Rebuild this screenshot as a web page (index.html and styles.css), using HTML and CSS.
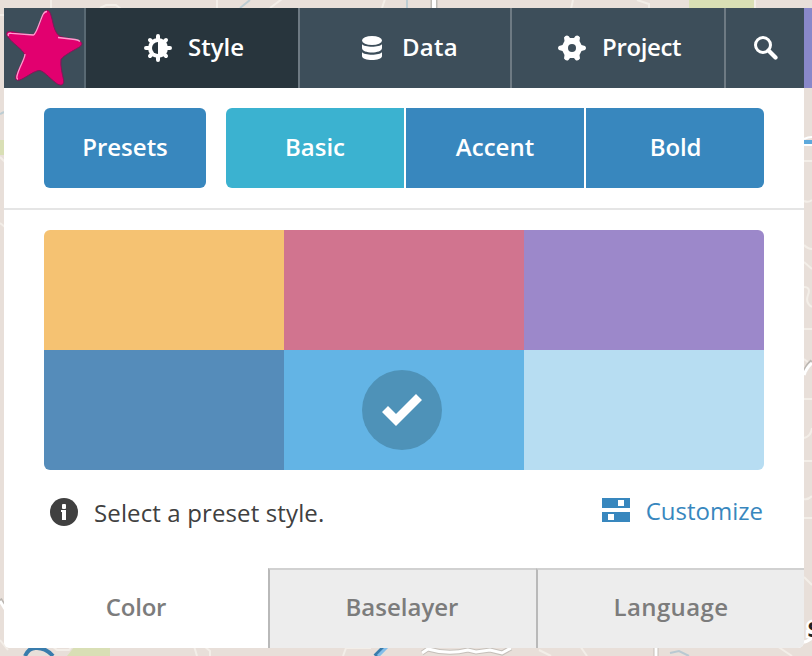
FILE: index.html
```html
<!DOCTYPE html>
<html lang="en">
<head>
<meta charset="utf-8">
<title>Map editor</title>
<link rel="stylesheet" href="styles.css">
</head>
<body>
<svg class="map" width="812" height="656" viewBox="0 0 812 656" fill="none" aria-hidden="true">
  <g fill="#d9dfb5"><path d="M689 0h65v10h-65zM0 140h6v15H0zM75 646h35v10H67z"/></g>
  <g stroke="#f3eee8" stroke-width="2">
    <path d="M0 15h5M51 0v10M100 8l6-3h10l5 4M217 0v10M270 8l12-9M382 8l3-9M573 0l-2 9M637 0l12 4v5M755 0v10"/>
    <path d="M0 157l5 5M0 223l5 4M0 640l8 10M52 646l5 4h12l3-4M194 646l3 10M204 646l6 5v5M343 656l3-8h25M539 650l12 6M580 646l7 10M777 646l15 10"/>
    <path d="M804 161h8M804 201q5 2 8-1M804 245q4 4 8 4M804 262l8 7M804 287q7 0 4 8t4 12M804 329h8M804 359l5 4M804 399h8M804 438q7-2 8-10M804 461h8M804 499q4 1 8-3M804 518h8M804 577l8 8"/>
  </g>
  <path d="M434 0v9" stroke="#bcbab5" stroke-width="7"/><path d="M434 0v9" stroke="#fff" stroke-width="4"/>
  <path d="M407 0v9M250 0l-10 8M0 114l4-2" stroke="#bdcdd3" stroke-width="2"/>
  <path d="M804 373q3-8 8-12M0 599l5 8" stroke="#bcb7b2" stroke-width="4"/>
  <path d="M804 375q3-8 8-12M0 601l5 8" stroke="#fff" stroke-width="3"/>
  <path d="M422 653l6-4q20 6 40 1l8 2 14-2 12 3 9-5M656 646v10" stroke="#c5c0ba" stroke-width="5"/>
  <path d="M422 653l6-4q20 6 40 1l8 2 14-2 12 3 9-5M656 646v10" stroke="#fff" stroke-width="3"/>
  <path d="M25 656q4-9 12-8 9 0 16 8M375 656l11-11" stroke="#397cac" stroke-width="4"/>
  <path d="M378 656l11-11" stroke="#83bee9" stroke-width="3"/>
  <path d="M804 139q4-2 8-2M804 145h8" stroke="#fff" stroke-width="2"/>
  <path d="M804 142h8" stroke="#5da9dc" stroke-width="4"/>
  <path d="M670 653l9-2 10 5" stroke="#b9c9d2" stroke-width="2"/>
  <path d="M803 642q4 0 9-4" stroke="#fff" stroke-width="3"/>
  <path d="M804 8h8v80h-8z" fill="#8988ca"/>
  <text class="map-label" x="807.500" y="637">S</text>
</svg>

<main class="panel">
  <nav class="topbar">
    <a class="logo">
      <svg width="80" height="80" viewBox="0 0 80 80" aria-hidden="true">
        <path d="M43 2.500c3-.5 4 4.500 5.500 10.500 1.500 7 3 12 7 15 6 2.500 15 2.500 20 5 4 2 2.500 4.500-1 6.500-5 3-15 8-17.500 12-.8 7 1.500 15 2.500 20 1 5-2 7-6 4.500-5-3-13-12.500-17.500-13.500-5-.5-14 7-19 9-4 2-6.500 0-5-4C14 61 21 51 20.500 46.500 19.500 42 8 35 4 29c-3-4-1-6 3-5.500 6 .5 17 4.500 23 2.500C34 22 37 12 39 7c1-3 2-4.500 4-4.500z" fill="#e2006f" stroke="#811759"/>
        <path d="M4.500 28c-1-2 0-3 3-2.700l22 1.700c3-1 6-13 9.500-20.500 1-2 2-3 4-3M54 29.500l17 2c3 .5 4 1 5 2M21 46c0 5-6 13-8 22-.4 2 0 3 1 3" fill="none" stroke="#ff9bce" stroke-width="1.300"/>
      </svg>
    </a>
    <a class="tab tab-style active">
      <svg class="icon" width="28" height="28" viewBox="0 0 28 28" aria-hidden="true">
        <g stroke="#fff" stroke-width="4" stroke-linecap="round"><path d="M14 2v24M2 14h24M6 6l16 16M6 22L22 6"/></g>
        <circle cx="14" cy="14" r="10" fill="#fff"/>
        <path d="M14 8a6 6 0 0 0 0 12z" fill="#28353d"/>
      </svg>
      <span>Style</span>
    </a>
    <a class="tab tab-data">
      <svg class="icon" width="20" height="24" viewBox="0 0 20 24" fill="#fff" aria-hidden="true">
        <ellipse cx="10" cy="4.500" rx="10" ry="4.500"/>
        <path d="M0 8c2 3.600 18 3.600 20 0v4c0 6-20 6-20 0zM0 16c2 3.600 18 3.600 20 0v4c0 5.300-20 5.300-20 0z"/>
      </svg>
      <span>Data</span>
    </a>
    <a class="tab tab-project">
      <svg class="icon" width="28" height="26" viewBox="0 0 28 26" aria-hidden="true">
        <path d="M6 2.500Q8-.5 10.500 1L12 3h4l1.500-2Q20-.5 22 2.500L21.500 6l2 4 3.500 1q2 2 0 4l-3.500 1-2 4 .5 3.500q-2 3-4.500 1.500L16 23h-4l-1.500 2Q8 26.500 6 23.500L6.500 20l-2-4L1 15q-2-2 0-4l3.500-1 2-4z" fill="#fff"/>
        <circle cx="14" cy="13" r="4" fill="#3d4e5a"/>
      </svg>
      <span>Project</span>
    </a>
    <a class="tab tab-search" aria-label="Search">
      <svg width="24" height="24" viewBox="0 0 24 24" fill="none" stroke="#fff" aria-hidden="true">
        <circle cx="9" cy="9" r="7.500" stroke-width="3"/>
        <path d="M14.500 14.500l7 7" stroke-width="4.200" stroke-linecap="round"/>
      </svg>
    </a>
  </nav>

  <div class="filters">
    <button class="btn presets">Presets</button>
    <div class="group">
      <button class="btn selected">Basic</button>
      <button class="btn">Accent</button>
      <button class="btn bold">Bold</button>
    </div>
  </div>

  <section class="content">
    <div class="swatches">
      <div class="swatch amber"></div>
      <div class="swatch rose"></div>
      <div class="swatch violet"></div>
      <div class="swatch steel"></div>
      <div class="swatch sky">
        <span class="check">
          <svg width="40" height="32" viewBox="0 0 40 32" aria-hidden="true"><path d="M0 18l6-6 8 8L34 0l6 6-26 26z" fill="#fff"/></svg>
        </span>
      </div>
      <div class="swatch ice"></div>
    </div>
    <div class="info">
      <p class="hint">
        <svg width="28" height="28" viewBox="0 0 28 28" aria-hidden="true">
          <circle cx="14" cy="14" r="14" fill="#404040"/>
          <path d="M12 7q0-1 1-1h2q1 0 1 1v3q0 1-1 1h-2q-1 0-1-1zM11 12h5v10h-4v-8h-1z" fill="#fff"/>
        </svg>
        <span>Select a preset style.</span>
      </p>
      <a class="customize">
        <svg width="28" height="24" viewBox="0 0 28 24" aria-hidden="true">
          <path d="M0 0h28v10H0zM0 14h28v10H0z" fill="#3887be"/>
          <path d="M16 2h6v6h-6zM6 16h6v6H6z" fill="#fff"/>
        </svg>
        <span>Customize</span>
      </a>
    </div>
  </section>

  <nav class="bottom">
    <a class="sub current"><span>Color</span></a>
    <a class="sub baselayer"><span>Baselayer</span></a>
    <a class="sub language"><span>Language</span></a>
  </nav>
</main>
</body>
</html>
```

FILE: styles.css
```css
* { box-sizing: border-box; }

body {
  margin: 0;
  padding: 8px 8px 8px 4px;
  height: 656px;
  overflow: hidden;
  background: #e8dfd9;
  font: 600 24px/40px "Open Sans", "Noto Sans", sans-serif;
}

.map { position: absolute; left: 0; top: 0; }
.map-label { font: 700 22px "Open Sans", sans-serif; fill: #222; stroke: #fff; stroke-width: 5px; paint-order: stroke; }

.panel {
  position: relative;
  display: flex;
  flex-direction: column;
  width: 800px;
  height: 640px;
  background: #fff;
  border-radius: 0 0 6px 6px;
  overflow: hidden;
}

.topbar { display: flex; height: 80px; background: #3d4e5a; color: #fff; }
.logo { width: 80px; height: 80px; }
.logo svg { display: block; }
.tab { display: flex; align-items: center; border-left: 2px solid #6e7a83; }
.tab span { position: relative; top: -1px; }
.tab-style { width: 214px; padding-left: 58px; gap: 16px; }
.tab-data { width: 212px; padding-left: 62px; gap: 20px; letter-spacing: 0.25px; }
.tab-project { width: 214px; padding-left: 46px; gap: 16px; letter-spacing: -0.35px; }
.tab-search { width: 80px; padding-left: 28px; }
.active { background: #28353d; border-left-color: #596973; }

.filters { display: flex; gap: 20px; height: 122px; padding: 20px 40px; border-bottom: 2px solid #e5e5e5; }
.group { display: flex; gap: 2px; border-radius: 6px; overflow: hidden; }
.btn { width: 178px; height: 80px; margin: 0; padding: 0 0 2px; border: 0; background: #3887be; color: #fff; font: inherit; }
.presets { width: 162px; border-radius: 6px; }
.selected { background: #3bb2d0; }
.bold { padding-left: 1px; letter-spacing: -0.2px; }

.content { height: 358px; padding: 20px 40px 0; }
.swatches { display: grid; grid-template-columns: repeat(3, 240px); grid-auto-rows: 120px; border-radius: 6px; overflow: hidden; }
.amber { background: #f5c272; }
.rose { background: #d1748f; }
.violet { background: #9c88ca; }
.steel { background: #558cba; }
.sky { display: flex; align-items: center; padding-left: 78px; background: #63b4e5; }
.ice { background: #b7ddf2; }
.check { display: flex; align-items: center; justify-content: center; width: 80px; height: 80px; border-radius: 50%; background: #4e92b8; }

.info { display: flex; justify-content: space-between; padding: 20px 1px 0 6px; font-weight: 400; }
.hint { display: flex; align-items: center; gap: 16px; height: 44px; margin: 0; color: #404040; letter-spacing: 0.13px; }
.hint span { padding-top: 2px; }
.customize { display: flex; align-items: center; gap: 16px; height: 40px; color: #3887be; }
.customize span { padding-top: 2px; }

.bottom { display: grid; grid-template-columns: 264px 268px 268px; height: 80px; color: #7c7c7c; }
.sub { display: flex; align-items: center; justify-content: center; padding-bottom: 4px; border-top: 2px solid #d1d1d1; border-left: 2px solid #b9b9b9; background: #ededed; }
.current { padding-bottom: 2px; border: 0; background: #fff; letter-spacing: -0.2px; }
.baselayer { padding-right: 2px; }
.language { letter-spacing: 0.4px; }
```
